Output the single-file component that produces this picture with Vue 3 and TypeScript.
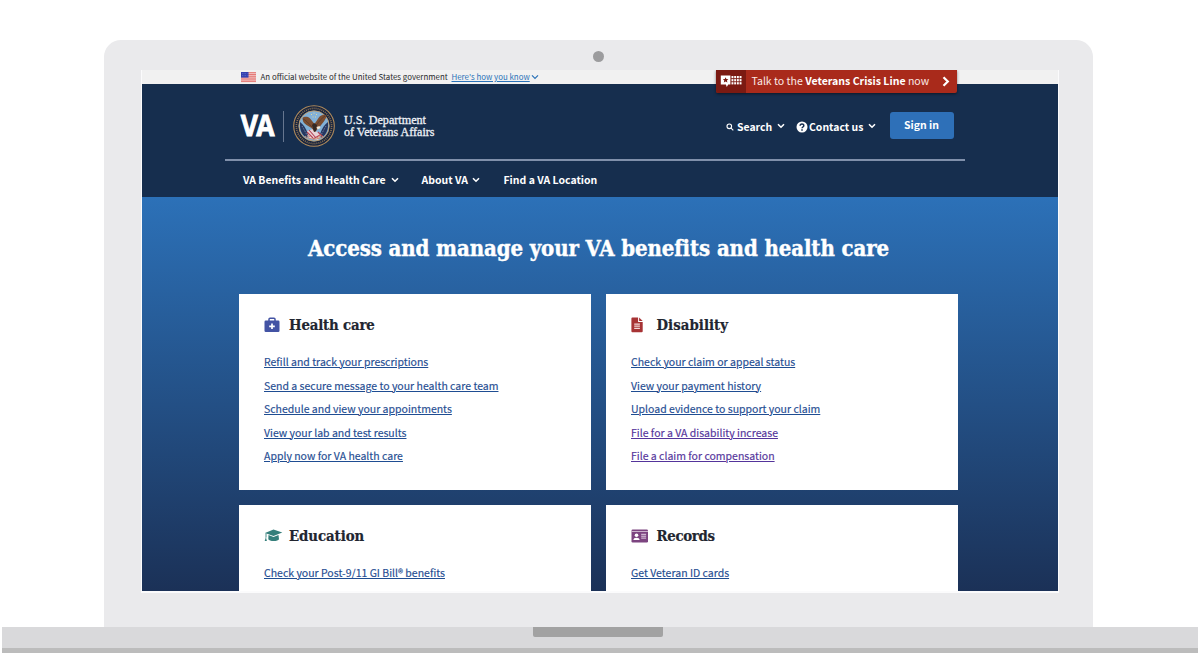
<script setup lang="ts">
interface BenefitLink {
  text: string
  visited?: boolean
}
interface Card {
  key: 'health' | 'disability' | 'education' | 'records'
  title: string
  links: BenefitLink[]
}

const cards: Card[] = [
  {
    key: 'health',
    title: 'Health care',
    links: [
      { text: 'Refill and track your prescriptions' },
      { text: 'Send a secure message to your health care team' },
      { text: 'Schedule and view your appointments' },
      { text: 'View your lab and test results' },
      { text: 'Apply now for VA health care' },
    ],
  },
  {
    key: 'disability',
    title: 'Disability',
    links: [
      { text: 'Check your claim or appeal status' },
      { text: 'View your payment history' },
      { text: 'Upload evidence to support your claim' },
      { text: 'File for a VA disability increase', visited: true },
      { text: 'File a claim for compensation', visited: true },
    ],
  },
  { key: 'education', title: 'Education', links: [{ text: 'Check your Post-9/11 GI Bill® benefits' }] },
  { key: 'records', title: 'Records', links: [{ text: 'Get Veteran ID cards' }] },
]

const dotColumns = [0, 1, 2, 3]
const dotRows = [0, 1, 2]
</script>

<template>
  <div class="stage">
    <div class="lid">
      <div class="camera"></div>
      <div class="screen">
        <div class="gov">
          <svg class="flag" viewBox="0 0 15 10">
            <rect width="15" height="10" fill="#f3c9c9" />
            <path d="M0 .7h15M0 2.5h15M0 4.3h15M0 6.1h15M0 7.9h15M0 9.6h15" stroke="#e2716c" stroke-width=".9" />
            <rect width="7.5" height="5.6" fill="#3440b0" />
            <path d="M1 1.6h5.5M1 3.6h5.5" stroke="#8d96dc" stroke-width=".6" stroke-dasharray=".7 1" />
          </svg>
          <span class="gov-text">An official website of the United States government</span>
          <a class="gov-link">Here's how you know</a>
          <svg class="gov-chev" viewBox="0 0 8 6"><path d="M1 1.3 4 4.3 7 1.3" fill="none" stroke="#2a72b8" stroke-width="1.2" /></svg>
        </div>

        <header class="header">
          <div class="top">
            <div class="brand">
              <svg class="va" viewBox="0 0 36 22">
                <text x=".8" y="21.2" textLength="31.800" lengthAdjust="spacingAndGlyphs">VA</text>
              </svg>
              <div class="rule"></div>
              <svg class="seal" viewBox="0 0 42 42">
                <circle cx="21" cy="21" r="20.3" fill="#17243f" stroke="#b18b5b" stroke-width="1.1" />
                <circle cx="21" cy="21" r="17.6" fill="none" stroke="#8a7152" stroke-width="1.700" stroke-dasharray="1 1" />
                <circle cx="21" cy="21" r="15.2" fill="#82b1d8" stroke="#c29c68" stroke-width=".9" />
                <path d="M7 17c3 2 6 6 8 12l-1 4c-4-2-7-7-7-12zM35 17c-3 2-6 6-8 12l1 4c4-2 7-7 7-12z" fill="#263760" />
                <path d="M9 21l5 9M33 21l-5 9" stroke="#a2afcf" stroke-width=".7" stroke-dasharray="1 1" />
                <path d="M14 26l6-2 8 6-3 5-9-2z" fill="#e8d3d7" />
                <path d="M14 27l6 6M16 25l7 8M25 27l5 5M27 30l-7 4" stroke="#b84254" stroke-width="1.1" />
                <path d="M9.500 13c1-1.500 6-2 8 1l4 5 4-6c2-3 6-4 8-2.500-.5 2.500-1 4-3 6.500l-4 5-4.500 5-3.500-4-5-3c-3-2-4-4-4-7z" fill="#7a4d31" />
                <path d="M10 14c3 1 5 4 9 8M32 11c-3 2-6 5-9 10" fill="none" stroke="#54372c" stroke-width=".8" />
                <path d="M19 20l2-2 3 2-1 6-2 1z" fill="#352823" />
                <path d="M23.500 22l3-1 1 2-3 1.500z" fill="#f1e8da" />
                <path d="M12 31c4 4 14 4 18 0M14 30l3 2M28 30l-4 3" fill="none" stroke="#ce8d72" stroke-width="1" />
                <path d="M18 9.5h1M20.5 8.2h1M23 9.5h1M19.5 12h1M22 12h1" stroke="#e3d79a" stroke-width="1" />
              </svg>
              <svg class="dept" viewBox="0 0 94 28">
                <text x="0" y="12" textLength="82" lengthAdjust="spacingAndGlyphs">U.S. Department</text>
                <text x="0" y="24" textLength="90.5" lengthAdjust="spacingAndGlyphs">of Veterans Affairs</text>
              </svg>
            </div>
            <div class="tools">
              <svg class="mag" viewBox="0 0 8 8"><circle cx="3.3" cy="3.3" r="2.3" /><path d="M5.1 5.1 7.3 7.3" /></svg>
              <span class="tool search">Search</span>
              <svg class="chev chev-search" viewBox="0 0 8 6"><path d="M1 1.2 4 4.2 7 1.2" /></svg>
              <svg class="help" viewBox="0 0 12 12">
                <circle cx="6" cy="6" r="5.5" fill="#fff" />
                <path d="M4.1 4.8C4.2 2.3 7.9 2.4 7.8 4.7 7.7 6 6 6 6 7.3M6 8.2v1.5" fill="none" stroke="#162e51" stroke-width="1.5" />
              </svg>
              <span class="tool contact">Contact us</span>
              <svg class="chev chev-contact" viewBox="0 0 8 6"><path d="M1 1.2 4 4.2 7 1.2" /></svg>
              <button class="signin">Sign in</button>
            </div>
          </div>
          <nav class="nav">
            <span class="nav-a">VA Benefits and Health Care</span>
            <svg class="chev" viewBox="0 0 8 6"><path d="M1 1.2 4 4.2 7 1.2" /></svg>
            <span class="nav-b">About VA</span>
            <svg class="chev" viewBox="0 0 8 6"><path d="M1 1.2 4 4.2 7 1.2" /></svg>
            <span class="nav-c">Find a VA Location</span>
          </nav>
        </header>

        <div class="crisis">
          <div class="crisis-icon">
            <svg viewBox="0 0 22 13">
              <path d="M.8.5h9.6v9H8.2L6.8 12 5.9 9.500H.8z" fill="#fff" />
              <path d="M5.600 2.200l.8 1.900 2 .1-1.500 1.300.5 2-1.800-1.100-1.800 1.100.5-2-1.500-1.300 2-.1z" fill="#7b1a12" />
              <template v-for="r in dotRows" :key="r">
                <rect v-for="c in dotColumns" :key="c" :x="11.500 + c * 2.700" :y="1 + r * 3.1" width="1.900" height="2.200" fill="#fff" />
              </template>
            </svg>
          </div>
          <span class="crisis-text">Talk to the <b>Veterans Crisis Line</b> now</span>
          <svg class="crisis-chev" viewBox="0 0 8 11"><path d="M1.500 1.200 5.800 5.500 1.500 9.800" fill="none" stroke="#fff" stroke-width="2.200" /></svg>
        </div>

        <main class="hero">
          <h1><span>Access and manage your VA benefits and health care</span></h1>
          <div class="grid">
            <section v-for="card in cards" :key="card.key" class="card">
              <h2 :class="card.key">
                <span class="icon">
                  <svg v-if="card.key === 'health'" width="16" height="16" viewBox="0 0 16 16">
                    <path d="M5 4V2.200Q5 1.200 6 1.200H10Q11 1.200 11 2.200V4" fill="none" stroke="#4353a4" stroke-width="1.500" />
                    <rect x=".5" y="3.500" width="15" height="11.500" rx="1.200" fill="#4353a4" />
                    <path d="M8 6.500v5.600M5.200 9.300h5.600" stroke="#fff" stroke-width="1.700" />
                  </svg>
                  <svg v-else-if="card.key === 'disability'" width="12" height="16" viewBox="0 0 12 16">
                    <path d="M1.400.5H7.100V5H11.700V14.200Q11.700 15.200 10.700 15.200H1.400Q.4 15.200.4 14.200V1.500Q.4.500 1.400.5z" fill="#a73335" />
                    <path d="M8.100.5 11.700 4.100H8.100z" fill="#a73335" />
                    <path d="M3.200 7.100h5.700M3.200 9.200h5.700M3.200 11.300h5.700" stroke="#f3d8d8" stroke-width="1.200" />
                  </svg>
                  <svg v-else-if="card.key === 'education'" width="19" height="13" viewBox="0 0 19 13">
                    <path d="M9.500.5 18.300 3.600 9.500 6.900 1 4z" fill="#357f7b" />
                    <path d="M4.500 6 9.500 7.900 14.500 6 15 10.200Q14 12 9.700 12T4.300 10.200z" fill="#357f7b" />
                    <path d="M2 4.200V8.500" stroke="#357f7b" stroke-width=".9" />
                    <path d="M1.900 8 2.900 12H.7z" fill="#357f7b" />
                  </svg>
                  <svg v-else width="18" height="14" viewBox="0 0 18 14">
                    <rect x=".5" y=".5" width="16.500" height="13" rx="1.200" fill="#7c4480" />
                    <path d="M.5 2.500H17" stroke="#d4bdd5" stroke-width=".9" />
                    <circle cx="5.500" cy="6.200" r="1.800" fill="#fff" />
                    <path d="M2.400 11Q2.600 8.800 5.500 8.800T8.600 11z" fill="#fff" />
                    <path d="M10.200 5.300h4.900M10.200 7.200h4.900M10.200 9.100h4.900" stroke="#e3d2e4" stroke-width="1" />
                  </svg>
                </span>
                <span class="title">{{ card.title }}</span>
              </h2>
              <ul>
                <li v-for="link in card.links" :key="link.text">
                  <a :class="{ visited: link.visited }">{{ link.text }}</a>
                </li>
              </ul>
            </section>
          </div>
        </main>
      </div>
    </div>
    <div class="base"><div class="notch"></div></div>
  </div>
</template>

<style>
body {
  margin: 0;
  background: #fff;
}
</style>

<style scoped>
.stage {
  width: 1200px;
  height: 655px;
  overflow: hidden;
  background: #fff;
  font-family: 'Noto Sans CJK SC', 'Noto Sans', sans-serif;
  display: flex;
  flex-direction: column;
  align-items: center;
}
svg {
  display: block;
  flex: none;
  overflow: visible;
}
span, a {
  white-space: nowrap;
}
.lid {
  box-sizing: border-box;
  width: 989px;
  height: 586.500px;
  margin: 40px 3px 0 0;
  padding: 30px 35px 0 37px;
  background: #eaeaec;
  border-radius: 17px 17px 0 0;
  position: relative;
  flex: none;
}
.camera {
  position: absolute;
  left: 489px;
  top: 11px;
  width: 11px;
  height: 11px;
  border-radius: 50%;
  background: #9c9c9e;
}
.screen {
  box-sizing: content-box;
  width: 916px;
  height: 521px;
  border: solid #fbfbfc;
  border-width: 0 1px 2px;
  overflow: hidden;
  position: relative;
  display: flex;
  flex-direction: column;
}
.base {
  width: 1196px;
  height: 26px;
  box-sizing: border-box;
  flex: none;
  background: #d9d9db;
  border-bottom: 5px solid #bcbcbc;
  display: flex;
  justify-content: center;
}
.notch {
  width: 130px;
  height: 10px;
  margin-right: 4px;
  background: #a2a2a2;
  border-radius: 0 0 2px 2px;
}
.gov {
  height: 14px;
  flex: none;
  box-sizing: border-box;
  padding-left: 99px;
  display: flex;
  align-items: center;
  background: #f1f1f1;
  font-size: 7.900px;
  line-height: 12px;
  color: #28292b;
}
.flag {
  width: 15px;
  height: 10px;
  margin-right: 4.500px;
}
.gov-text {
  width: 191px;
}
.gov-link {
  color: #2a72b8;
  text-decoration: underline;
  width: 79px;
}
.gov-chev {
  width: 8px;
  height: 6px;
}
.header {
  height: 113px;
  flex: none;
  background: #162e4e;
  color: #fff;
  padding: 0 93px 0 83px;
}
.top {
  height: 75px;
  border-bottom: 2px solid #8090ab;
  display: flex;
  justify-content: space-between;
}
.brand {
  display: flex;
  align-items: center;
  padding: 9px 0 0 15px;
  box-sizing: border-box;
}
.va {
  width: 36px;
  height: 22px;
}
.va text {
  font: 700 29px 'Open Sans', sans-serif;
  letter-spacing: -2px;
  fill: #fff;
  stroke: #fff;
  stroke-width: .9px;
}
.rule {
  width: 1px;
  height: 31px;
  margin: 0 9px 0 7px;
  background: #66768f;
}
.seal {
  width: 42px;
  height: 42px;
}
.dept {
  width: 94px;
  height: 28px;
  margin-left: 9px;
}
.dept text {
  font: 400 12px 'Liberation Serif', serif;
  fill: #eef1f6;
  stroke: #eef1f6;
  stroke-width: .3px;
}
.tools {
  display: flex;
  align-items: center;
  padding: 8px 12px 0 0;
  box-sizing: border-box;
  font-size: 10.450px;
  font-weight: 700;
}
.mag {
  width: 8px;
  height: 8px;
  margin: 2px 3px 0 0;
  fill: none;
  stroke: #fff;
  stroke-width: 1.1px;
}
.tool {
  line-height: 16px;
  margin-top: 2px;
}
.search {
  width: 40px;
}
.contact {
  width: 59px;
}
.chev {
  width: 8px;
  height: 6px;
  fill: none;
  stroke: #fff;
  stroke-width: 1.600px;
}
.chev-search {
  margin-right: 11px;
}
.help {
  width: 12px;
  height: 12px;
  margin: 2px 1px 0 0;
}
.chev-contact {
  margin-right: 14px;
}
.signin {
  width: 64px;
  height: 27px;
  margin: -1px -1px 0 0;
  border: 0;
  border-radius: 3px;
  padding: 0 1px 1px 0;
  background: #2e70b8;
  color: #fff;
  font: 700 10.450px 'Noto Sans CJK SC', sans-serif;
}
.nav {
  height: 36px;
  padding: 2px 0 0 18px;
  box-sizing: border-box;
  display: flex;
  align-items: center;
  font-size: 10.470px;
  font-weight: 700;
  line-height: 16px;
}
.nav-a {
  width: 147.500px;
}
.nav-b {
  width: 50.500px;
  margin-left: 23px;
}
.nav-c {
  margin-left: 23.500px;
}
.crisis {
  position: absolute;
  left: 574px;
  top: 0;
  width: 241px;
  height: 22.500px;
  background: #a92a1b;
  box-shadow: 0 1px 3px rgba(0, 0, 0, .5);
  border-radius: 0 0 2px 2px;
  display: flex;
  align-items: center;
  overflow: hidden;
}
.crisis-icon {
  width: 30px;
  height: 23px;
  background: #7b1a12;
  display: flex;
  align-items: center;
  justify-content: center;
  flex: none;
}
.crisis-icon svg {
  width: 22px;
  height: 13px;
}
.crisis-text {
  margin: 0 0 0 5.500px;
  width: 190.500px;
  color: #fbe9e5;
  font-size: 10.540px;
  line-height: 16px;
}
.crisis-text b {
  color: #fff;
}
.crisis-chev {
  width: 8px;
  height: 11px;
}
.hero {
  flex: 1;
  min-height: 0;
  background: linear-gradient(#2c71b8, #1b3157);
}
h1 {
  margin: 0;
  height: 97px;
  box-sizing: border-box;
  padding-top: 34px;
  padding-left: 166px;
  font: 700 22px/34px 'DejaVu Serif Condensed', 'DejaVu Serif', serif;
  font-stretch: condensed;
  letter-spacing: -.1px;
  color: #fff;
  -webkit-text-stroke: .4px #fff;
}
.grid {
  display: grid;
  grid-template-columns: 352px 352px;
  grid-template-rows: 195.500px 195.500px;
  gap: 15px;
  padding-left: 97px;
}
.card {
  background: #fff;
  box-sizing: border-box;
  padding: 21px 0 0 25px;
}
h2 {
  margin: 0 0 15px;
  height: 20px;
  display: flex;
  align-items: center;
  font: 700 14.800px/20px 'DejaVu Serif Condensed', 'DejaVu Serif', serif;
  font-stretch: condensed;
  letter-spacing: -.17px;
  color: #212530;
  -webkit-text-stroke: .2px #212530;
}
h2.disability {
  letter-spacing: .05px;
}
h2.education {
  letter-spacing: -.05px;
}
h2.records {
  letter-spacing: -.3px;
}
.icon {
  width: 25.500px;
}
h2.health .icon,
h2.education .icon {
  width: 25px;
}
ul {
  list-style: none;
  margin: 0;
  padding: 0;
}
li {
  height: 23.500px;
  line-height: 23.500px;
  font-size: 10.510px;
}
li a {
  color: #1f4d92;
  text-decoration: underline;
  text-decoration-thickness: 1px;
  text-underline-offset: 1px;
  -webkit-text-stroke: .15px currentColor;
}
li a.visited {
  color: #54349b;
}
</style>
